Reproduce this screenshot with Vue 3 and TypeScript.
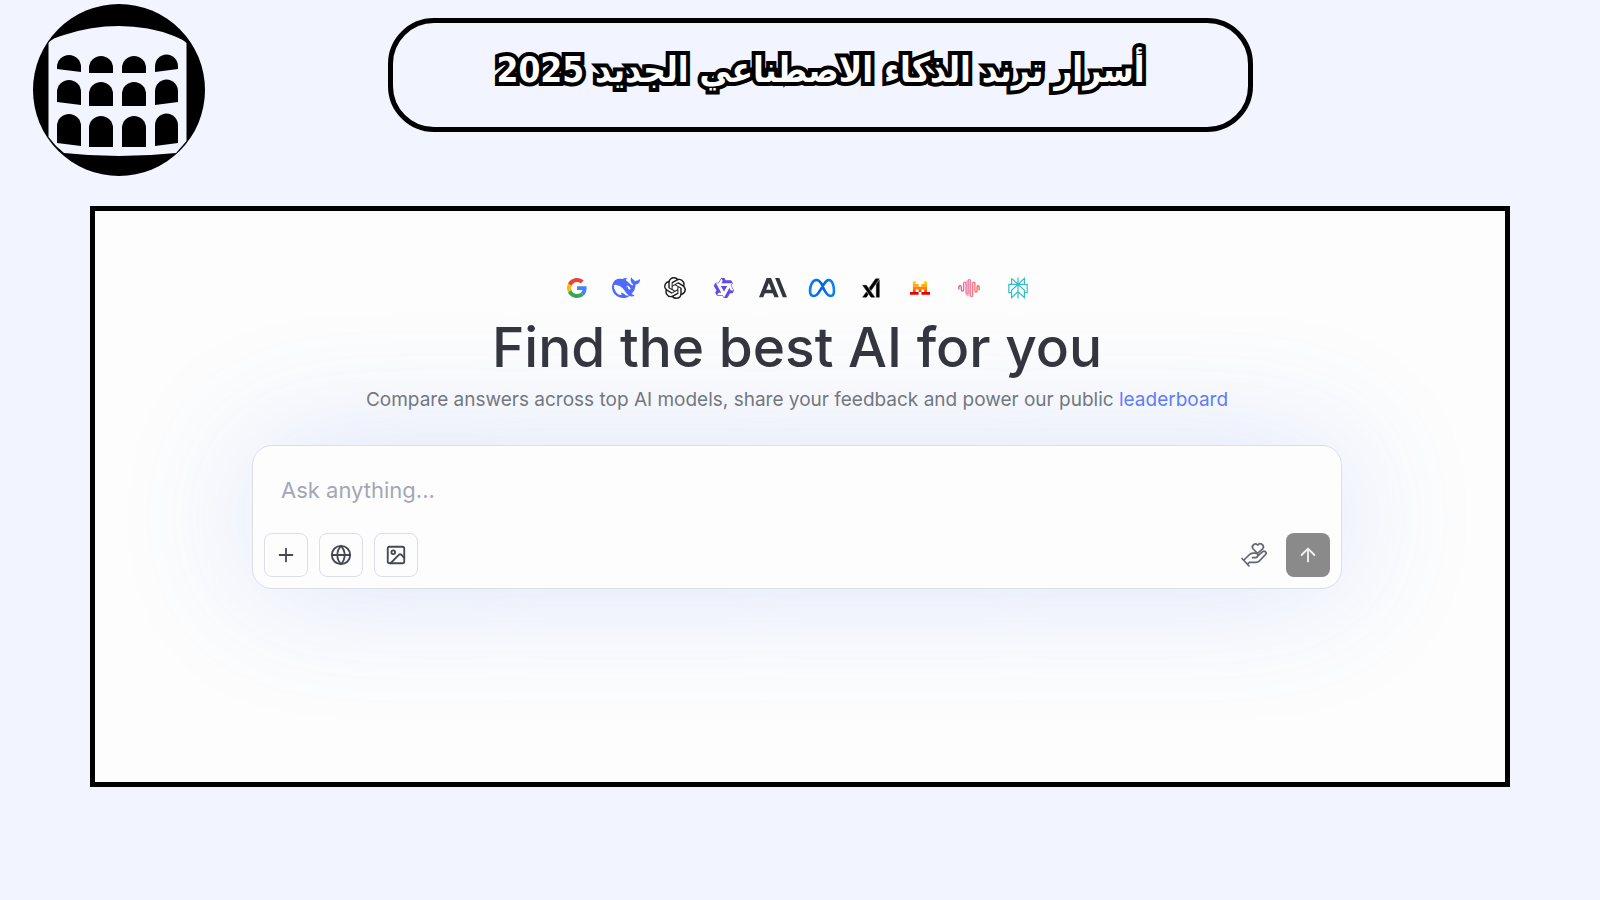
<script setup lang="ts">
import { ref } from 'vue'

const prompt = ref<string>('')
const arches: { x: number; w: number; slope: number }[] = [
  { x: 24, w: 24, slope: 3 },
  { x: 56, w: 24, slope: 1 },
  { x: 89, w: 24, slope: -1 },
  { x: 122, w: 23, slope: -3 },
]
const rows: { inner: number; outer: number; bottom: number }[] = [
  { inner: 52, outer: 51, bottom: 68 },
  { inner: 78, outer: 76, bottom: 101 },
  { inner: 112, outer: 110, bottom: 142 },
]

function archPath(col: number, row: number): string {
  const a = arches[col]
  const r = rows[row]
  const edge = col === 0 || col === 3
  const top = edge ? r.outer : r.inner
  const half = a.w / 2
  const drop = edge ? 3 : 0
  const left = a.slope > 0 ? r.bottom - drop : r.bottom
  const right = a.slope > 0 ? r.bottom : r.bottom - drop
  const lift = edge ? 0 : 1
  return `M${a.x} ${left + lift}V${top + half}a${half} 12 0 0 1 ${a.w} 0V${right + lift}z`
}
</script>

<template>
  <div class="page">
    <header class="top">
      <svg class="emblem" viewBox="0 0 172 172" role="img" aria-label="Arches emblem">
        <circle cx="86" cy="86" r="86" fill="#000" />
        <path d="M15.500 39Q19 34 31 31Q58 22 86 22Q116 22 141 32Q151 36 153.500 39V137L143 149Q115 152 86 152Q58 152 31 149Q22 142 15.500 133z" fill="#f2f5ff" />
        <template v-for="(_, r) in rows" :key="r">
          <path v-for="(__, c) in arches" :key="c" :d="archPath(c, r)" fill="#000" />
        </template>
      </svg>
      <h1 class="title" dir="rtl" lang="ar">أسرار ترند الذكاء الاصطناعي الجديد 2025</h1>
    </header>

    <main class="frame">
      <div class="models">
        <svg viewBox="0 0 48 48" class="m small" role="img" aria-label="Google">
          <path fill="#EA4335" d="M24 9.500c3.540 0 6.710 1.220 9.210 3.600l6.850-6.850C35.900 2.380 30.470 0 24 0 14.620 0 6.510 5.380 2.560 13.220l7.980 6.190C12.430 13.720 17.740 9.500 24 9.500z" />
          <path fill="#4285F4" d="M46.980 24.550c0-1.570-.15-3.090-.38-4.550H24v9.020h12.940c-.58 2.960-2.260 5.480-4.780 7.180l7.730 6c4.510-4.180 7.090-10.360 7.090-17.650z" />
          <path fill="#FBBC05" d="M10.530 28.590c-.48-1.450-.76-2.990-.76-4.590s.27-3.140.76-4.590l-7.980-6.190C.92 16.460 0 20.120 0 24c0 3.880.92 7.540 2.560 10.780l7.970-6.190z" />
          <path fill="#34A853" d="M24 48c6.480 0 11.930-2.130 15.890-5.810l-7.730-6c-2.150 1.450-4.920 2.300-8.160 2.300-6.260 0-11.570-4.220-13.470-9.910l-7.980 6.190C6.510 42.620 14.620 48 24 48z" />
        </svg>
        <svg viewBox="0 0 24 24" class="m wide" role="img" aria-label="DeepSeek">
          <path fill="#4D6BFE" d="M23.748 4.482c-.254-.124-.364.113-.512.234-.051.039-.094.09-.137.136-.372.397-.806.657-1.373.626-.829-.046-1.537.214-2.163.848-.133-.782-.575-1.248-1.247-1.548-.352-.156-.708-.311-.955-.65-.172-.241-.219-.51-.305-.774-.055-.16-.11-.323-.293-.35-.2-.031-.278.136-.356.276-.313.572-.434 1.202-.422 1.840.027 1.436.633 2.580 1.838 3.393.137.093.172.187.129.323-.082.280-.18.552-.266.833-.055.179-.137.217-.329.140a5.526 5.526 0 01-1.736-1.180c-.857-.828-1.631-1.742-2.597-2.458a11.365 11.365 0 00-.689-.471c-.985-.957.130-1.743.388-1.836.270-.098.093-.432-.779-.428-.872.004-1.670.295-2.687.684a3.055 3.055 0 01-.465.137 9.597 9.597 0 00-2.883-.102c-1.885.210-3.390 1.102-4.497 2.623C.082 8.606-.231 10.684.152 12.850c.403 2.284 1.569 4.175 3.360 5.653 1.858 1.533 3.997 2.284 6.438 2.140 1.482-.085 3.133-.284 4.994-1.860.470.234.962.327 1.780.397.630.059 1.236-.03 1.705-.128.735-.156.684-.837.419-.961-2.155-1.004-1.682-.595-2.113-.926 1.096-1.296 2.746-2.642 3.392-7.003.050-.347.007-.565 0-.845-.004-.17.035-.237.230-.256a4.173 4.173 0 001.545-.475c1.396-.763 1.960-2.015 2.093-3.517.020-.23-.004-.467-.247-.588zM11.581 18c-2.089-1.642-3.102-2.183-3.520-2.160-.392.024-.321.471-.235.763.090.288.207.486.371.739.114.167.192.416-.113.603-.673.416-1.842-.14-1.897-.167-1.361-.802-2.500-1.860-3.301-3.307-.774-1.393-1.224-2.887-1.298-4.482-.02-.386.093-.522.477-.592a4.696 4.696 0 011.529-.039c2.132.312 3.946 1.265 5.468 2.774.868.860 1.525 1.887 2.202 2.891.720 1.066 1.494 2.082 2.480 2.914.348.292.625.514.891.677-.802.090-2.140.110-3.054-.614zm1-6.440a.306.306 0 01.415-.287.302.302 0 01.2.288.306.306 0 01-.31.307.303.303 0 01-.304-.308zm3.110 1.596c-.2.081-.399.151-.59.160a1.245 1.245 0 01-.798-.254c-.274-.23-.47-.358-.552-.758a1.730 1.730 0 01.016-.588c.070-.327-.008-.537-.239-.727-.187-.156-.426-.199-.688-.199a.559.559 0 01-.254-.078c-.11-.054-.2-.19-.114-.358.028-.054.160-.186.192-.21.356-.202.767-.136 1.146.016.352.144.618.408 1.001.782.391.451.462.576.685.914.176.265.336.537.445.848.067.195-.019.354-.25.452z" />
        </svg>
        <svg viewBox="0 0 24 24" class="m" role="img" aria-label="OpenAI">
          <path fill="#1c1c1e" d="M22.2819 9.8211a5.9847 5.9847 0 0 0-.5157-4.9108 6.0462 6.0462 0 0 0-6.5098-2.9A6.0651 6.0651 0 0 0 4.9807 4.1818a5.9847 5.9847 0 0 0-3.9977 2.9 6.0462 6.0462 0 0 0 .7427 7.0966 5.98 5.98 0 0 0 .511 4.9107 6.051 6.051 0 0 0 6.5146 2.9001A5.9847 5.9847 0 0 0 13.2599 24a6.0557 6.0557 0 0 0 5.7718-4.2058 5.9894 5.9894 0 0 0 3.9977-2.9001 6.0557 6.0557 0 0 0-.7475-7.0729zm-9.022 12.6081a4.4755 4.4755 0 0 1-2.8764-1.0408l.1419-.0804 4.7783-2.7582a.7948.7948 0 0 0 .3927-.6813v-6.7369l2.02 1.1686a.071.071 0 0 1 .038.052v5.5826a4.504 4.504 0 0 1-4.4945 4.4944zm-9.6607-4.1254a4.4708 4.4708 0 0 1-.5346-3.0137l.142.0852 4.783 2.7582a.7712.7712 0 0 0 .7806 0l5.8428-3.3685v2.3324a.0804.0804 0 0 1-.0332.0615L9.74 19.9502a4.4992 4.4992 0 0 1-6.1408-1.6464zM2.3408 7.8956a4.485 4.485 0 0 1 2.3655-1.9728V11.6a.7664.7664 0 0 0 .3879.6765l5.8144 3.3543-2.0201 1.1685a.0757.0757 0 0 1-.071 0l-4.8303-2.7865A4.504 4.504 0 0 1 2.3408 7.872zm16.5963 3.8558L13.1038 8.364 15.1192 7.2a.0757.0757 0 0 1 .071 0l4.8303 2.7913a4.4944 4.4944 0 0 1-.6765 8.1042v-5.6772a.79.79 0 0 0-.407-.667zm2.0107-3.0231l-.142-.0852-4.7735-2.7818a.7759.7759 0 0 0-.7854 0L9.409 9.2297V6.8974a.0662.0662 0 0 1 .0284-.0615l4.8303-2.7866a4.4992 4.4992 0 0 1 6.6802 4.66zM8.3065 12.863l-2.02-1.1638a.0804.0804 0 0 1-.038-.0567V6.0742a4.4992 4.4992 0 0 1 7.3757-3.4537l-.142.0805L8.704 5.459a.7948.7948 0 0 0-.3927.6813zm1.0976-2.3654l2.602-1.4998 2.6069 1.4998v2.9994l-2.5974 1.4997-2.6067-1.4997Z" />
        </svg>
        <svg viewBox="0 0 24 24" class="m" role="img" aria-label="Qwen">
          <path fill="#6049e8" d="M12.604 1.340c.393.690.784 1.382 1.174 2.075a.18.18 0 00.157.091h5.552c.174 0 .322.110.446.327l1.454 2.570c.190.337.240.478.024.837-.26.430-.513.864-.76 1.300l-.367.658c-.106.196-.223.280-.04.512l2.652 4.637c.172.301.111.494-.043.770-.437.785-.882 1.564-1.335 2.340-.159.272-.352.375-.68.370-.777-.016-1.552-.01-2.327.016a.099.099 0 00-.081.050 575.097 575.097 0 01-2.705 4.740c-.169.293-.38.363-.725.364-.997.003-2.002.004-3.017.002a.537.537 0 01-.465-.271l-1.335-2.323a.09.09 0 00-.083-.049H4.982c-.285.030-.553-.001-.805-.092l-1.603-2.770a.543.543 0 01-.002-.54l1.207-2.120a.198.198 0 000-.197 550.951 550.951 0 01-1.875-3.272l-.79-1.395c-.16-.31-.173-.496.095-.965.465-.813.927-1.625 1.387-2.436.132-.234.304-.334.584-.335a338.300 338.300 0 012.589-.001.124.124 0 00.107-.063l2.806-4.895a.488.488 0 01.422-.246c.524-.001 1.053 0 1.583-.006L11.704 1c.341-.003.724.032.9.340zm-3.432.403a.06.06 0 00-.052.030L6.254 6.788a.157.157 0 01-.135.078H3.253c-.056 0-.07.025-.041.074l5.810 10.156c.025.042.013.062-.034.063l-2.795.015a.218.218 0 00-.2.116l-1.320 2.310c-.044.078-.021.118.068.118l5.716.008c.046 0 .08.020.104.061l1.403 2.454c.046.081.092.082.139 0l5.006-8.760.783-1.382a.055.055 0 01.096 0l1.424 2.530a.122.122 0 00.107.062l2.763-.02a.04.04 0 00.035-.02.041.041 0 000-.04l-2.900-5.086a.108.108 0 010-.113l.293-.507 1.120-1.977c.024-.041.012-.062-.035-.062H9.200c-.059 0-.073-.026-.043-.077l1.434-2.505a.107.107 0 000-.114L9.225 1.774a.06.06 0 00-.053-.031zm6.290 8.020c.046 0 .058.020.034.060l-.832 1.465-2.613 4.585a.056.056 0 01-.05.029.058.058 0 01-.05-.029L8.498 9.841c-.02-.034-.01-.052.028-.054l.216-.012 6.722-.012z" />
        </svg>
        <svg viewBox="0 0 24 24" class="m wide" role="img" aria-label="Anthropic">
          <path fill="#34363f" d="M13.827 3.520h3.603L24 20h-3.603l-6.570-16.480zm-7.258 0h3.767L16.906 20h-3.674l-1.343-3.461H5.017l-1.344 3.460H0L6.570 3.522zm4.132 9.959L8.453 7.687 6.205 13.480H10.700z" />
        </svg>
        <svg viewBox="0 0 28 24" class="m wide" role="img" aria-label="Meta" fill="none" stroke-width="2.600">
          <defs>
            <linearGradient id="meta" x1="0" x2="1"><stop offset="0" stop-color="#0a7cf5" /><stop offset=".5" stop-color="#0064e0" /><stop offset="1" stop-color="#0a84f8" /></linearGradient>
          </defs>
          <path stroke="url(#meta)" d="M14 8.500C12.200 5.500 10.500 4 8.300 4 4.700 4 2 9.500 2 14.800c0 3.400 1.500 5.200 3.900 5.200 2.200 0 3.700-1.300 6.200-5.600L16 8.200C17.500 5.500 18.800 4 20.800 4 24 4 26 9 26 14.800c0 3.400-1.300 5.200-3.500 5.200-2.300 0-3.600-1.500-6.200-5.800z" />
        </svg>
        <svg viewBox="0 0 24 24" class="m small" role="img" aria-label="xAI">
          <path fill="#000" stroke="#000" stroke-width=".5" d="M6.469 8.776L16.512 23h-4.464L2.005 8.776H6.470zm-.004 7.900l2.233 3.164L6.467 23H2l4.465-6.324zM22 2.582V23h-3.659V7.764L22 2.582zM22 1l-9.952 14.095-2.233-3.163L17.533 1H22z" />
        </svg>
        <svg viewBox="0 0 24 24" class="m small" role="img" aria-label="Mistral">
          <path fill="#ffd000" d="M3.500 4h3.400v3.300H3.500zM17 4h3.400v3.300H17z" />
          <path fill="#ffaf00" d="M3.500 7.200h6.800v3.300H3.500zM13.700 7.200h6.700v3.300h-6.700z" />
          <path fill="#ff8205" d="M3.500 10.400h16.900v3.300H3.500z" />
          <path fill="#fa500f" d="M3.500 13.600h3.400v3.300H3.500zM10.300 13.600h3.400v3.300h-3.400zM17 13.600h3.400v3.300H17z" />
          <path fill="#e10500" d="M0 16.800h10.300V20H0zM13.700 16.800H24V20H13.700z" />
        </svg>
        <svg viewBox="0 0 24 24" class="m" role="img" aria-label="Inflection">
          <defs>
            <linearGradient id="wave" x1="0" x2="1"><stop offset="0" stop-color="#e043a0" /><stop offset=".5" stop-color="#f58aa8" /><stop offset="1" stop-color="#f4564f" /></linearGradient>
          </defs>
          <rect x="8.500" y="3" width="6" height="18" rx="2" fill="#f9a8b8" opacity=".7" />
          <path fill="none" stroke="url(#wave)" stroke-width="1.400" stroke-linecap="round" d="M1 13v-2q0-1.500 1.300-1.500T3.600 11v3q0 1.500 1.300 1.500T6.200 14V7q0-1.500 1.300-1.500T8.800 7v10q0 1.500 1.200 1.500t1.200-1.500V4q0-1.500 1.200-1.500T13.600 4v16q0 1.500 1.200 1.500T16 20V7q0-1.500 1.200-1.500T18.400 7v8q0 1.500 1.200 1.500t1.200-1.500v-4q0-1.500 1.100-1.500T23 11v3" />
        </svg>
        <svg viewBox="0 0 24 24" class="m" role="img" aria-label="Perplexity">
          <path fill="none" stroke="#35bccb" stroke-width="1.300" d="M12 .5v23M5 1.500L12 8l7-6.500V8M5 1.500V8M12 8l-7 6.500v8l7-6.500 7 6.500v-8L12 8M5 17H2V8h20v9h-3" />
        </svg>
      </div>

      <h2 class="heading">Find the best AI for you</h2>
      <p class="sub">
        Compare answers across top AI models, share your feedback and power our public
        <a href="#leaderboard">leaderboard</a>
      </p>

      <form class="composer" @submit.prevent>
        <textarea v-model="prompt" class="field" rows="1" placeholder="Ask anything..." aria-label="Ask anything"></textarea>
        <div class="actions">
          <button type="button" class="tool" aria-label="Add">
            <svg viewBox="0 0 24 24"><path d="M5 12h14M12 5v14" /></svg>
          </button>
          <button type="button" class="tool" aria-label="Search the web">
            <svg viewBox="0 0 24 24"><circle cx="12" cy="12" r="10" /><path d="M12 2a14.500 14.500 0 0 0 0 20 14.500 14.500 0 0 0 0-20M2 12h20" /></svg>
          </button>
          <button type="button" class="tool" aria-label="Image">
            <svg viewBox="0 0 24 24"><rect x="3" y="3" width="18" height="18" rx="2" /><circle cx="9" cy="9" r="2" /><path d="m21 15-3.086-3.086a2 2 0 0 0-2.828 0L6 21" /></svg>
          </button>
          <button type="button" class="give" aria-label="Support">
            <svg viewBox="-1 0 40 40"><path d="M23.500 18.300l-4.300-4.300a3 3 0 0 1 4.600-3.900 3 3 0 0 1 4.900 3.700z" /><path d="M8 23.500l7 7.500M10 25l5-5q1.800-1.800 4-1.800h2.500q2.500 0 2.300 2.200t-2.300 2.200H18.500M13.500 29l2-1.700H22q2 0 3.500-1.500l6-6.300q1.300-1.500 0-2.700t-3 0l-4.700 4" /></svg>
          </button>
          <button type="submit" class="send" aria-label="Send">
            <svg viewBox="0 0 24 24"><path d="m5 12 7-7 7 7M12 19V5" /></svg>
          </button>
        </div>
      </form>
    </main>
  </div>
</template>

<style>
body {
  margin: 0;
  background: #f2f5ff;
}
</style>

<style scoped>
.page {
  box-sizing: border-box;
  min-height: 100vh;
  padding-top: 4px;
  background: #f2f5ff;
  font-family: Inter, "Liberation Sans", sans-serif;
}
.top {
  display: flex;
  align-items: flex-start;
  padding-left: 33px;
}
.emblem {
  flex: none;
  width: 172px;
  height: 172px;
}
.title {
  box-sizing: border-box;
  width: 55.2%;
  min-width: 0;
  margin: 14px 0 0 183px;
  padding: 22px 16px 32px;
  border: 5px solid #000;
  border-radius: 46px;
  text-align: center;
  font-family: "DejaVu Sans Condensed", "DejaVu Sans", sans-serif;
  font-size: 35px;
  line-height: 50px;
  font-weight: 700;
  color: #fff;
  -webkit-text-stroke: 8px #000;
  paint-order: stroke fill;
}
.frame {
  margin: 30px 90px 0;
  padding: 63px 163px 193px 157px;
  border: 5px solid #000;
  background: #fdfdfd;
}
.models {
  display: flex;
  justify-content: center;
  gap: 21px;
}
.m {
  flex: none;
  box-sizing: border-box;
  width: 28px;
  height: 28px;
  padding: 3px;
}
.small {
  padding: 4px;
}
.wide {
  padding: 0;
}
.heading {
  margin: 9px 0 0;
  text-align: center;
  font-size: 55px;
  line-height: 72px;
  font-weight: 500;
  color: #34363f;
}
.sub {
  margin: 2px 0 0;
  text-align: center;
  font-size: 19px;
  line-height: 30px;
  color: #737780;
}
.sub a {
  color: #5f7cfa;
  text-decoration: none;
}
.composer {
  box-sizing: border-box;
  margin-top: 30px;
  padding: 28px 11px 11px;
  border: 1px solid #dcdde7;
  border-radius: 20px;
  background: #fdfdfd;
  box-shadow: 0 0 136px rgba(70, 115, 240, 0.19);
}
.field {
  display: block;
  box-sizing: border-box;
  width: 100%;
  height: 32px;
  margin: 0 0 27px;
  padding: 0 17px;
  border: 0;
  outline: 0;
  resize: none;
  background: transparent;
  font: 400 22px/32px Inter, "Liberation Sans", sans-serif;
  color: #34363f;
}
.field::placeholder {
  color: #a3a7b5;
  opacity: 1;
}
.actions {
  display: flex;
  align-items: center;
  gap: 11px;
}
button {
  display: grid;
  place-items: center;
  flex: none;
  box-sizing: border-box;
  width: 44px;
  height: 44px;
  padding: 0;
  border: 0;
  border-radius: 8px;
  background: transparent;
}
button svg {
  width: 22px;
  height: 22px;
  fill: none;
  stroke: #454854;
  stroke-width: 2;
  stroke-linecap: round;
  stroke-linejoin: round;
}
.tool {
  border: 1px solid #dddfe8;
}
.give {
  margin-left: auto;
}
.give svg {
  width: 40px;
  height: 40px;
  stroke: #626675;
  stroke-width: 1.7;
}
.send {
  background: #8a8a8a;
}
.send svg {
  stroke: #f3f3f3;
}
</style>
